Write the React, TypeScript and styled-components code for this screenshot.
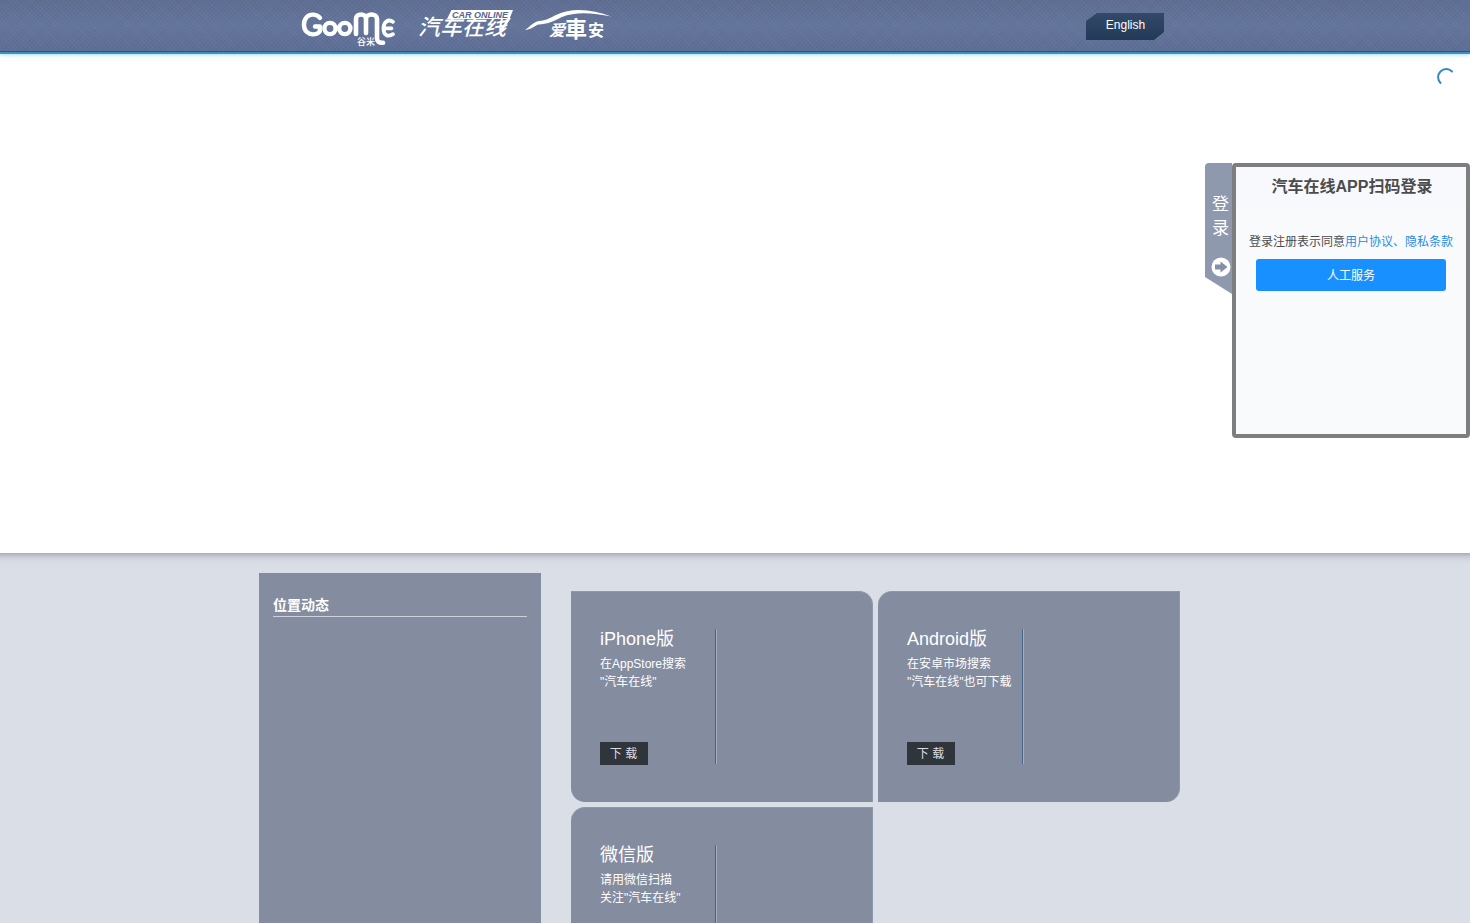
import React from "react";
import styled, { createGlobalStyle, keyframes } from "styled-components";

const fontStack = `"Liberation Sans", "Noto Sans CJK SC", sans-serif`;

const GlobalStyle = createGlobalStyle`
  * { box-sizing: border-box; }
  html { scrollbar-width: none; }
  body {
    margin: 0;
    background: #dadee7;
    font-family: ${fontStack};
    font-size: 12px;
    line-height: 18px;
    color: #4c4c4c;
  }
  h2, h3, p { margin: 0; }
  button { font-family: inherit; border: 0; padding: 0; cursor: pointer; }
`;

const Container = styled.div`
  width: 100%;
  max-width: 952px;
  margin: 0 auto;
`;

const Header = styled.header`
  position: relative;
  z-index: 1;
  height: 54px;
  border-bottom: 2px solid #3d8fc2;
  background:
    linear-gradient(to top, #2a5482 0, #2a5482 1px, transparent 1px),
    repeating-linear-gradient(45deg, rgba(255, 255, 255, 0.03) 0 1px, transparent 1px 3px),
    repeating-linear-gradient(-45deg, rgba(20, 30, 80, 0.04) 0 1px, transparent 1px 3px),
    linear-gradient(#5e6d92, #64759b 50%, #5d6d94);
  box-shadow: 0 1px 4px #a8def9;
`;

const HeaderRow = styled(Container)`
  display: flex;
  align-items: flex-start;
  justify-content: space-between;
  padding: 0 47px 0 31px;
`;

const LogoLink = styled.a`
  display: block;
  height: 50px;
  svg { display: block; }
`;

const LanguageButton = styled.button`
  width: 78px;
  height: 27px;
  margin-top: 13px;
  padding: 0 0 3px 1px;
  color: #fff;
  font-size: 12px;
  background: linear-gradient(#33496a, #223a56);
  clip-path: polygon(11px 0, 100% 0, 100% 19px, 68px 100%, 0 100%, 0 8px);
`;

const Hero = styled.main`
  position: relative;
  display: flex;
  justify-content: flex-end;
  align-items: flex-start;
  min-height: 499px;
  padding-top: 109px;
  background: #fff;
`;

const spin = keyframes`
  to { transform: rotate(360deg); }
`;

const Spinner = styled.svg`
  position: absolute;
  top: 13px;
  right: 14px;
  animation: ${spin} 1s linear infinite paused;
`;

const LoginTab = styled.button`
  display: flex;
  flex-direction: column;
  align-items: center;
  width: 27px;
  height: 131px;
  padding: 30px 0 0 4px;
  border-radius: 4px 0 0 0;
  background: #8e99ae;
  color: #fff;
  font-size: 17px;
  line-height: 24px;
  clip-path: polygon(0 0, 100% 0, 100% 100%, 0 114px);
  svg { flex: none; margin-top: 16px; }
`;

const LoginPanel = styled.section`
  width: 238px;
  min-height: 275px;
  border: 4px solid #7e7e7e;
  border-radius: 4px;
  background: #f9fafc;
  text-align: center;
`;

const PanelTitle = styled.h2`
  padding-left: 2px;
  background: #f8f9fc;
  font-size: 16px;
  line-height: 40px;
`;

const Agreement = styled.p`
  margin: 26px 0 8px;
  a { color: #2a8be0; text-decoration: none; }
`;

const ServiceButton = styled.button`
  width: 190px;
  height: 32px;
  padding-bottom: 2px;
  border-radius: 3px;
  background: #1890ff;
  color: #fff;
  font-size: 12px;
`;

const Downloads = styled.section`
  padding: 20px 0;
  background: linear-gradient(#a9aeb9, #c8ccd6 4px, #d6dae3 8px, #dadee7 12px);
`;

const DownloadsRow = styled(Container)`
  display: flex;
  align-items: flex-start;
  gap: 30px;
`;

const News = styled.aside`
  flex: none;
  width: 282px;
  min-height: 445px;
  padding: 22px 14px;
  background: #848ca0;
`;

const NewsTitle = styled.h3`
  height: 22px;
  border-bottom: 1px solid #ccd1db;
  color: #fff;
  font-size: 14px;
  line-height: 20px;
`;

const CardGrid = styled.div`
  display: grid;
  grid-template-columns: 302px 302px;
  gap: 5px;
  padding-top: 18px;
`;

const Card = styled.article<{ $corners: string }>`
  display: flex;
  height: 211px;
  padding: 37px 29px;
  border: 1px solid #8f98a9;
  border-width: 1px 1px 0 0;
  border-radius: ${(p) => p.$corners};
  background: #848ca0;
  color: #fff;
`;

const CardBody = styled.div`
  display: flex;
  flex-direction: column;
  align-items: flex-start;
  width: 116px;
  height: 135px;
  border-right: 1px solid #46658a;
  box-shadow: 1px 0 #a3b0c0;
  white-space: nowrap;
`;

const CardTitle = styled.h3`
  margin-bottom: 6px;
  font-size: 18px;
  font-weight: 400;
  line-height: 20px;
`;

const DownloadButton = styled.button`
  width: 48px;
  height: 23px;
  flex: none;
  margin-top: 51px;
  padding: 0 1px 2px 0;
  background: #30353c;
  color: #dcdde0;
  font-size: 12px;
`;

const cards = [
  { title: "iPhone版", lines: ["在AppStore搜索", '"汽车在线"'], corners: "0 14px 0 14px" },
  { title: "Android版", lines: ["在安卓市场搜索", '"汽车在线"也可下载'], corners: "14px 0 14px 0" },
  { title: "微信版", lines: ["请用微信扫描", '关注"汽车在线"'], corners: "14px 0 0 14px" },
];

/* Three marks side by side: GooMe, Car Online and the car outline. */
function Logos() {
  return (
    <svg width="330" height="50" viewBox="0 0 330 50" fill="#fff" role="img" aria-label="GooMe">
      <g fill="none" stroke="#fff" strokeWidth="4.4" strokeLinecap="round" strokeLinejoin="round">
        <path d="M30 17.800 C27 14 20 13.400 16.800 17 C13 21 13 28.500 16.800 32 C20.500 35.500 27 35 29.800 31.500 V26.500 H25" />
        <circle cx="40" cy="28.500" r="5.600" />
        <circle cx="54.800" cy="28.500" r="5.600" />
        <path d="M66 34 V19 C66 13 76 13 76 19 V33 M76 19 C76 13 87 13 87 19 V38 C87 42 89 43 93 42.800" strokeWidth="4.600" />
        <path d="M103 21.800 C98 18.500 93.500 22 93.500 28.500 C93.500 35 98 37.500 103 34.200 M94 28.300 H101.500" strokeWidth="3.800" />
      </g>
      <text x="67" y="45" fontSize="9" fontWeight="500">谷米</text>

      <text x="128" y="35" fontSize="22" fontWeight="500" fontStyle="italic">汽车在线</text>
      <path d="M218 18 H221 L213 30 H210 Z" />
      <path d="M161.500 10 H223 L219.500 19 H157 Z" />
      <text x="162" y="18" fontSize="9" fontWeight="700" fontStyle="italic" fill="#536795">CAR ONLINE</text>

      <path d="M235 30 C240 27 243 22 249 21 C256 20.500 260 18 266 15 C282 7 303 9.500 321 16.500 C304 13 286 11 272 17 C262 22 257 24 249 24.500 C245 25 243 29 235 30 Z" />
      <text x="259" y="36" fontSize="16" fontWeight="700" fontStyle="italic">爱</text>
      <text x="275" y="37" fontSize="22" fontWeight="700">車</text>
      <text x="298" y="36" fontSize="16" fontWeight="700">安</text>
    </svg>
  );
}

export default function App() {
  return (
    <>
      <GlobalStyle />
      <Header>
        <HeaderRow>
          <LogoLink href="#"><Logos /></LogoLink>
          <LanguageButton type="button">English</LanguageButton>
        </HeaderRow>
      </Header>

      <Hero>
        <Spinner width="20" height="20" viewBox="0 0 20 20" fill="none" aria-hidden="true">
          <path d="M16 4.500 A8 8 0 1 0 4.500 16" stroke="#3289bd" strokeWidth="2" strokeLinecap="round" />
        </Spinner>
        <LoginTab type="button">
          <span>登</span>
          <span>录</span>
          <svg width="20" height="20" viewBox="0 0 20 20" aria-hidden="true">
            <circle cx="10" cy="10" r="9.500" fill="#fff" />
            <path d="M4 7.500 H9.500 V4.500 L16.500 10 L9.500 15.500 V12.500 H4 Z" fill="#8590a7" />
          </svg>
        </LoginTab>
        <LoginPanel>
          <PanelTitle>汽车在线APP扫码登录</PanelTitle>
          <Agreement>
            登录注册表示同意<a href="#terms">用户协议、</a><a href="#privacy">隐私条款</a>
          </Agreement>
          <ServiceButton type="button">人工服务</ServiceButton>
        </LoginPanel>
      </Hero>

      <Downloads>
        <DownloadsRow>
          <News>
            <NewsTitle>位置动态</NewsTitle>
          </News>
          <CardGrid>
            {cards.map((card) => (
              <Card key={card.title} $corners={card.corners}>
                <CardBody>
                  <CardTitle>{card.title}</CardTitle>
                  {card.lines.map((line) => <p key={line}>{line}</p>)}
                  <DownloadButton type="button">下 载</DownloadButton>
                </CardBody>
              </Card>
            ))}
          </CardGrid>
        </DownloadsRow>
      </Downloads>
    </>
  );
}
